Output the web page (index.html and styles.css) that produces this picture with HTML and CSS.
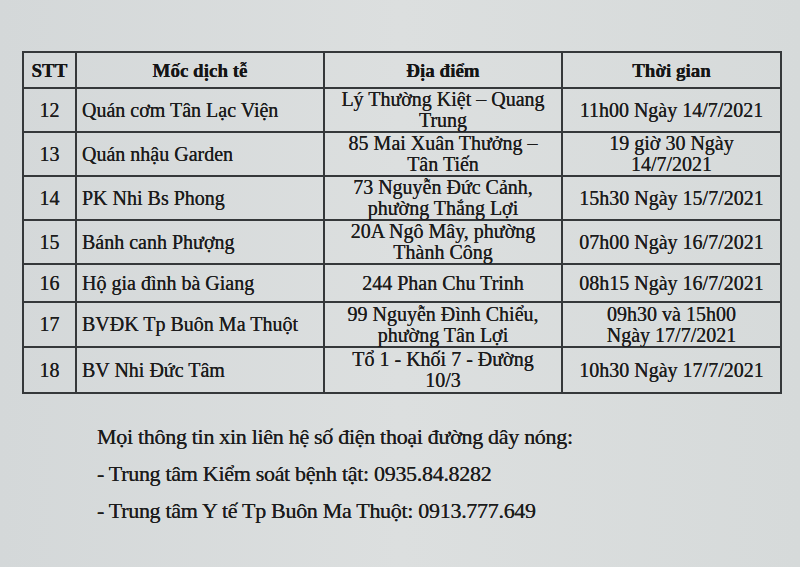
FILE: index.html
```html
<!DOCTYPE html>
<html lang="vi">
<head>
<meta charset="utf-8">
<title>Lịch trình dịch tễ</title>
<link rel="stylesheet" href="styles.css">
</head>
<body>
<div class="page">
  <table class="tbl">
    <colgroup>
      <col class="c-stt"><col class="c-moc"><col class="c-dd"><col class="c-tg">
    </colgroup>
    <thead>
      <tr class="r-h"><th>STT</th><th>Mốc dịch tễ</th><th>Địa điểm</th><th>Thời gian</th></tr>
    </thead>
    <tbody>
      <tr class="r1"><td class="ctr">12</td><td>Quán cơm Tân Lạc Viện</td><td class="ctr">Lý Thường Kiệt – Quang<br>Trung</td><td class="ctr">11h00 Ngày 14/7/2021</td></tr>
      <tr class="r2"><td class="ctr">13</td><td>Quán nhậu Garden</td><td class="ctr">85 Mai Xuân Thưởng –<br>Tân Tiến</td><td class="ctr">19 giờ 30 Ngày<br>14/7/2021</td></tr>
      <tr class="r3"><td class="ctr">14</td><td>PK Nhi Bs Phong</td><td class="ctr">73 Nguyễn Đức Cảnh,<br>phường Thắng Lợi</td><td class="ctr">15h30 Ngày 15/7/2021</td></tr>
      <tr class="r4"><td class="ctr">15</td><td>Bánh canh Phượng</td><td class="ctr">20A Ngô Mây, phường<br>Thành Công</td><td class="ctr">07h00 Ngày 16/7/2021</td></tr>
      <tr class="r5"><td class="ctr">16</td><td>Hộ gia đình bà Giang</td><td class="ctr">244 Phan Chu Trinh</td><td class="ctr">08h15 Ngày 16/7/2021</td></tr>
      <tr class="r6"><td class="ctr">17</td><td>BVĐK Tp Buôn Ma Thuột</td><td class="ctr">99 Nguyễn Đình Chiểu,<br>phường Tân Lợi</td><td class="ctr">09h30 và 15h00<br>Ngày 17/7/2021</td></tr>
      <tr class="r7"><td class="ctr">18</td><td>BV Nhi Đức Tâm</td><td class="ctr">Tổ 1 - Khối 7 - Đường<br>10/3</td><td class="ctr">10h30 Ngày 17/7/2021</td></tr>
    </tbody>
  </table>
  <div class="note">
    <p>Mọi thông tin xin liên hệ số điện thoại đường dây nóng:</p>
    <p>- Trung tâm Kiểm soát bệnh tật: 0935.84.8282</p>
    <p>- Trung tâm Y tế Tp Buôn Ma Thuột: 0913.777.649</p>
  </div>
</div>
</body>
</html>
```
FILE: styles.css
```css
html, body {
  margin: 0;
  padding: 0;
  background: #d7dbdb;
  overflow: hidden;
}
.page {
  width: 800px;
  height: 567px;
  overflow: hidden;
  padding-top: 51px;
  box-sizing: border-box;
  font-family: "Liberation Serif", "Times New Roman", serif;
  color: #1c1c1c;
  background: linear-gradient(90deg, #d4d8d9 0%, #dcdfdf 50%, #d6dada 100%);
}
.tbl {
  margin-left: 22px;
  width: 758px;
  border-collapse: collapse;
  table-layout: fixed;
  font-size: 20px;
  text-shadow: 0 0 0.4px #1c1c1c;
}
.c-stt { width: 53px; }
.c-moc { width: 248px; }
.c-dd { width: 238px; }
.c-tg { width: 219px; }
.tbl th, .tbl td {
  border: 2px solid #35383a;
  padding: 0 5px;
  line-height: 21px;
  vertical-align: middle;
}
.tbl th {
  font-size: 19px;
  font-weight: bold;
  text-align: center;
  color: #151515;
}
.tbl td { text-align: left; }
.tbl td.ctr { text-align: center; }
.r-h { height: 36px; }
.r1 { height: 37px; }
.r2 { height: 41px; }
.r3 { height: 43px; }
.r4 { height: 44px; }
.r5 { height: 38px; }
.r6 { height: 45px; }
.r7 { height: 46px; }
.note {
  margin-top: 24px;
  margin-left: 97px;
  font-size: 22px;
  text-shadow: 0 0 0.4px #1c1c1c;
}
.note p {
  margin: 0;
  line-height: 37px;
  letter-spacing: -0.3px;
}
```
